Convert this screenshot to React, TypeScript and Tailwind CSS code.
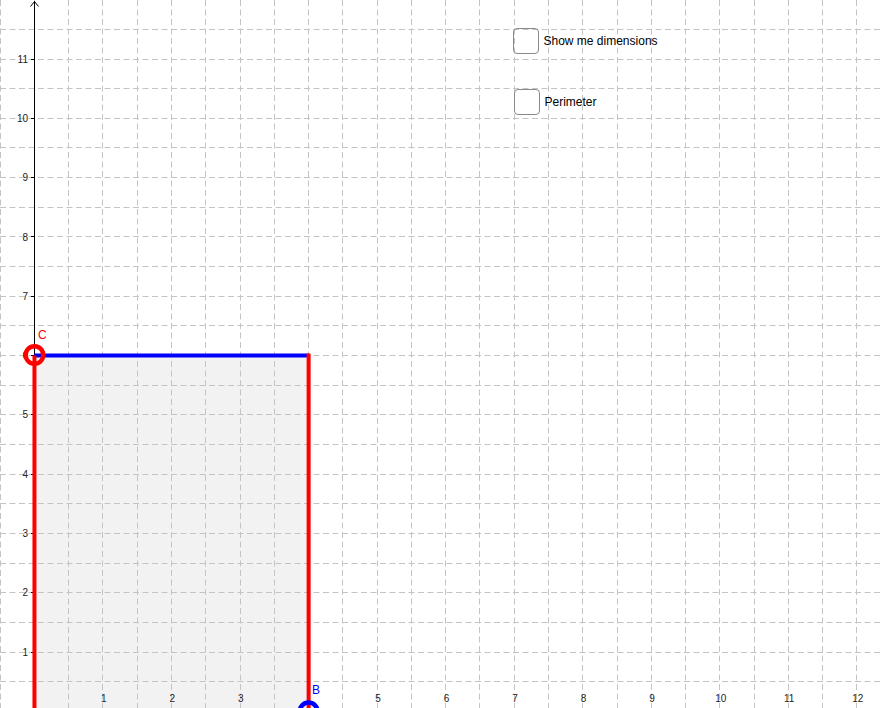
import React from "react";

const OX = 34.45;
const OY = 711.3;
const UX = 68.545;
const UY = 59.3;

const px = (v: number) => OX + v * UX;
const py = (v: number) => OY - v * UY;
const crisp = (v: number) => Math.floor(v) + 0.5;

function Graph() {
  const vLines: number[] = [];
  for (let k = -1; k <= 25; k++) vLines.push(crisp(OX + k * (UX / 2)));
  const hLines: number[] = [];
  for (let k = 0; k <= 24; k++) hLines.push(crisp(OY - k * (UY / 2)));
  const yLabels = Array.from({ length: 11 }, (_, i) => i + 1);
  const xLabels = [1, 2, 3, 5, 6, 7, 8, 9, 10, 11, 12];
  const left = px(0);
  const right = px(4);
  const top = py(6);
  return (
    <svg width={881} height={708} viewBox="0 0 881 708" className="block">
      <rect x={0} y={0} width={881} height={708} fill="#ffffff" />
      <rect x={left} y={top} width={right - left} height={708 - top} fill="#f2f2f2" />
      <g stroke="#c4c4c4" strokeWidth={1} strokeDasharray="6 3.5">
        {vLines.map((x) => (
          <line key={"v" + x} x1={x} y1={0} x2={x} y2={708} />
        ))}
        {hLines.map((y) => (
          <line key={"h" + y} x1={0} y1={y} x2={881} y2={y} />
        ))}
      </g>
      {/* y axis */}
      <line x1={34.5} y1={1} x2={34.5} y2={708} stroke="#000" strokeWidth={1} />
      <polyline points="30.5,6.5 34.5,1.5 38.5,6.5" fill="none" stroke="#000" strokeWidth={1} />
      <g stroke="#000" strokeWidth={1}>
        {yLabels.map((n) => (
          <line key={"t" + n} x1={31} y1={crisp(py(n))} x2={34.5} y2={crisp(py(n))} />
        ))}
      </g>
      <g fontFamily="'Liberation Sans', Arial, sans-serif" fontSize={10} fill="#222">
        {yLabels.map((n) => (
          <text key={"y" + n} x={28} y={py(n) + 3.6} textAnchor="end">
            {n}
          </text>
        ))}
        {xLabels.map((n) => (
          <text key={"x" + n} x={px(n) + 0.8} y={701.5} textAnchor="middle">
            {n}
          </text>
        ))}
      </g>
      {/* rectangle sides */}
      <line x1={left} y1={top} x2={right} y2={top} stroke="#0000ff" strokeWidth={4} />
      <line x1={left} y1={top} x2={left} y2={708} stroke="#ff0000" strokeWidth={4} />
      <line x1={right} y1={top - 2} x2={right} y2={708} stroke="#ff0000" strokeWidth={4} />
      {/* points */}
      <circle cx={left} cy={top - 0.5} r={8.8} fill="none" stroke="#ff0000" strokeWidth={4.5} />
      <circle cx={right} cy={OY} r={8.8} fill="none" stroke="#0000ff" strokeWidth={4.5} />
      <g fontFamily="'Liberation Sans', Arial, sans-serif" fontSize={12}>
        <text x={38} y={338.5} fill="#ff0000">
          C
        </text>
        <text x={312} y={693.5} fill="#0000ff">
          B
        </text>
      </g>
    </svg>
  );
}

function CheckBox({ label, className }: { label: string; className: string }) {
  return (
    <label className={"absolute flex items-center gap-[5px] " + className}>
      <span className="block w-[26px] h-[26px] rounded-[4px] border-[1.5px] border-[#8a8a8a] bg-transparent" />
      <span className="text-[12px] leading-[14px] text-black font-['Liberation_Sans',Arial,sans-serif]">
        {label}
      </span>
    </label>
  );
}

export default function App() {
  return (
    <div className="relative w-[881px] h-[708px] overflow-hidden bg-white">
      <Graph />
      <CheckBox label="Show me dimensions" className="left-[512.5px] top-[27.5px]" />
      <CheckBox label="Perimeter" className="left-[513.5px] top-[88.5px]" />
    </div>
  );
}
